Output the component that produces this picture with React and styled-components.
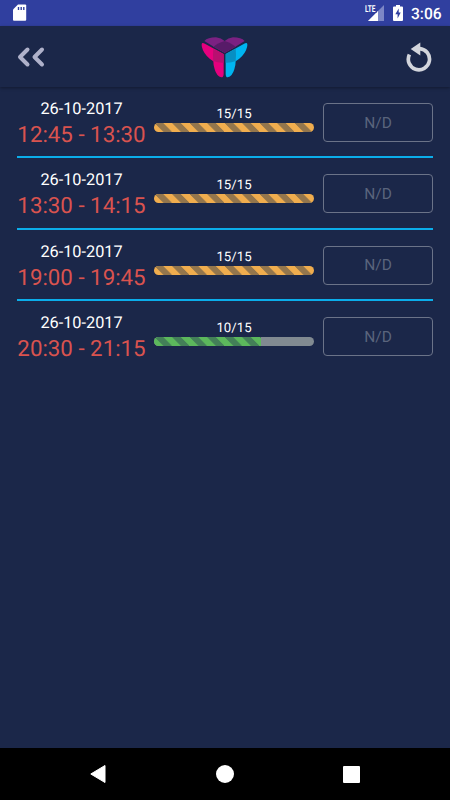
import React from "react"
import styled, { createGlobalStyle } from "styled-components"

const GlobalStyle = createGlobalStyle`
    * {
        box-sizing: border-box;
    }

    body {
        margin: 0;
        background-color: #1b2749;
        font-family: Roboto, sans-serif;
        text-rendering: geometricPrecision;
    }
`

const Screen = styled.div`
    display: flex;
    flex-direction: column;
    width: 450px;
    height: 800px;
    overflow: hidden;
    background-color: #1b2749;
`

const StatusBar = styled.div`
    display: flex;
    justify-content: space-between;
    flex-shrink: 0;
    height: 26px;
    padding: 0 9px 0 13px;
    background-color: #303f9f;
`

const StatusGroup = styled.div`
    display: flex;
`

const Clock = styled.span`
    width: 30px;
    margin-left: 8px;
    color: #fff;
    font-size: 15.6px;
    font-weight: 500;
    line-height: 28px;
    white-space: nowrap;
`

const Header = styled.header`
    display: flex;
    align-items: center;
    justify-content: space-between;
    flex-shrink: 0;
    height: 61px;
    padding: 0 18px 0 17px;
    box-shadow: 0 1px 3px rgba(0, 0, 0, 0.35);
`

const IconButton = styled.button`
    display: flex;
    width: 30px;
    padding: 0;
    border: none;
    background: none;
    justify-content: ${(props) => (props.$end ? "flex-end" : "flex-start")};
`

const LogoSvg = styled.svg`
    margin: 2px 0 0;
`

const List = styled.main`
    flex: 1;
    padding: 0 17px;
`

const Row = styled.div`
    display: flex;
    height: 71.35px;
    padding-top: 12px;
    border-bottom: ${(props) => (props.$last ? "none" : "2px solid #0badea")};
`

const When = styled.div`
    display: flex;
    flex-direction: column;
    align-items: center;
    width: 129px;
    white-space: nowrap;
`

const DateText = styled.span`
    color: #fff;
    font-size: 16.3px;
    line-height: 19px;
`

const Hours = styled.span`
    margin-top: 5px;
    color: #d9534f;
    font-size: 22.3px;
    line-height: 25px;
`

const Places = styled.div`
    display: flex;
    flex-direction: column;
    align-items: center;
    width: 160px;
    margin: 7px 9px 0 8px;
`

const Count = styled.span`
    height: 17px;
    color: #fff;
    font-size: 13.2px;
    line-height: 18px;
`

const Track = styled.div`
    width: 160px;
    height: 9px;
    overflow: hidden;
    border-radius: 5px;
    background-color: #818a91;
`

const Fill = styled.div`
    height: 100%;
    background-color: ${(props) => props.$color};
    background-image: linear-gradient(
        45deg,
        ${(props) => props.$stripe} 25%,
        transparent 25%,
        transparent 50%,
        ${(props) => props.$stripe} 50%,
        ${(props) => props.$stripe} 75%,
        transparent 75%
    );
    background-size: 17.5px 17.5px;
`

const BookButton = styled.button`
    width: 110px;
    height: 39px;
    margin-top: 4px;
    padding: 0;
    border: 1px solid #6b7388;
    border-radius: 4px;
    background: none;
    color: #5a647c;
    font-family: inherit;
    font-size: 15.5px;
`

const NavBar = styled.nav`
    display: flex;
    align-items: center;
    justify-content: space-between;
    flex-shrink: 0;
    height: 52px;
    padding: 0 90px;
    background-color: #000;
`

const slots = [
    { date: "26-10-2017", hours: "12:45 - 13:30", taken: 15, total: 15 },
    { date: "26-10-2017", hours: "13:30 - 14:15", taken: 15, total: 15 },
    { date: "26-10-2017", hours: "19:00 - 19:45", taken: 15, total: 15 },
    { date: "26-10-2017", hours: "20:30 - 21:15", taken: 10, total: 15 },
]

const SdCard = () => (
    <svg width="14" height="26" viewBox="0 0 14 26">
        <path d="M5 4.5h7.2q1 0 1 1v14.2q0 1-1 1H1q-1 0-1-1V9.5z" fill="#fff" />
        <path d="M5.5 7v3M8.2 7v3M10.8 7v3" stroke="#303f9f" strokeWidth="1.4" />
    </svg>
)

const Signal = () => (
    <svg width="28" height="26" viewBox="0 0 28 26">
        <path d="M19 5v16H3z" fill="#7d87c6" />
        <path d="M13 11v10H3z" fill="#fff" />
        <path d="M0 3h12v9.5H0z" fill="#303f9f" />
        <text x="0" y="12" fill="#fff" fontSize="9.6" fontWeight="700" textLength="10.5" lengthAdjust="spacingAndGlyphs">LTE</text>
    </svg>
)

const Battery = () => (
    <svg width="10" height="26" viewBox="0 0 10 26">
        <path d="M3 5h4v1.5h2q1 0 1 1V20q0 1-1 1H1q-1 0-1-1V7.5q0-1 1-1h2z" fill="#fff" />
        <path d="M5.7 8.5L2.3 14.3h2.3V18.5L7.7 12.6H5.7z" fill="#303f9f" />
    </svg>
)

const Back = () => (
    <svg width="28" height="22" viewBox="0 0 28 22" fill="none" stroke="#afb1ca" strokeWidth="4" strokeLinecap="round" strokeLinejoin="round">
        <path d="M10.5 3.5L3 11l7.5 7.5M25 3.5L17.5 11l7.5 7.5" />
    </svg>
)

const Reload = () => (
    <svg width="26" height="31" viewBox="0 0 26 31">
        <path d="M3.4 13.5A10.6 10.6 0 1 0 13.6 7.6" fill="none" stroke="#d3d5dc" strokeWidth="3.7" />
        <path d="M4.7 8L14.3 1.6v13z" fill="#d3d5dc" />
    </svg>
)

const Logo = () => (
    <LogoSvg width="47" height="42" viewBox="35 34 141 126">
        <path d="M45 46Q55 35 80 35Q96 37 106 46Q132 55 140 62L106 81Q76 66 45 46z" fill="#7b2182" />
        <path d="M166 46Q156 35 131 35Q116 37 106 46Q80 53 71 62L106 81Q136 66 166 46z" fill="#7b2182" />
        <path d="M106 46Q129 54 138 63L106 81L73 63Q84 53 106 46z" fill="#571b68" />
        <path d="M39 52Q44 52 48 55L103 85V144Q103 155 96 155Q82 152 76 131Q72 120 72 107Q50 94 41 74Q34 56 39 52z" fill="#e6007e" />
        <path d="M72 69L103 86V111Q86 112 72 106Q70 87 72 69z" fill="#b90f70" />
        <path d="M172 52Q167 52 163 55L109 85V144Q109 155 115 155Q129 152 135 131Q139 120 139 107Q161 94 170 74Q177 56 172 52z" fill="#00b5f1" />
        <path d="M139 69L109 86V111Q125 112 139 106Q141 87 139 69z" fill="#078fc3" />
    </LogoSvg>
)

const Slot = ({ slot, last }) => {
    const full = slot.taken === slot.total

    return (
        <Row $last={last}>
            <When>
                <DateText>{slot.date}</DateText>
                <Hours>{slot.hours}</Hours>
            </When>
            <Places>
                <Count>{slot.taken}/{slot.total}</Count>
                <Track>
                    <Fill
                        $color={full ? "#f0ad4e" : "#5cb85c"}
                        $stripe={full ? "#94764c" : "#438058"}
                        style={{ width: `${(slot.taken / slot.total) * 100}%` }}
                    />
                </Track>
            </Places>
            <BookButton disabled>N/D</BookButton>
        </Row>
    )
}

const App = () => (
    <>
        <GlobalStyle />
        <Screen>
            <StatusBar>
                <SdCard />
                <StatusGroup>
                    <Signal />
                    <Battery />
                    <Clock>3:06</Clock>
                </StatusGroup>
            </StatusBar>
            <Header>
                <IconButton><Back /></IconButton>
                <Logo />
                <IconButton $end><Reload /></IconButton>
            </Header>
            <List>
                {slots.map((slot, i) => (
                    <Slot key={i} slot={slot} last={i === slots.length - 1} />
                ))}
            </List>
            <NavBar>
                <svg width="16" height="18" viewBox="0 0 16 18">
                    <path d="M15 .5V17.5L.8 9z" fill="#fff" stroke="#fff" strokeLinejoin="round" />
                </svg>
                <svg width="18" height="18" viewBox="0 0 18 18">
                    <circle cx="9" cy="9" r="9" fill="#fff" />
                </svg>
                <svg width="17" height="17" viewBox="0 0 17 17">
                    <rect width="17" height="17" rx="1" fill="#fff" />
                </svg>
            </NavBar>
        </Screen>
    </>
)

export default App
